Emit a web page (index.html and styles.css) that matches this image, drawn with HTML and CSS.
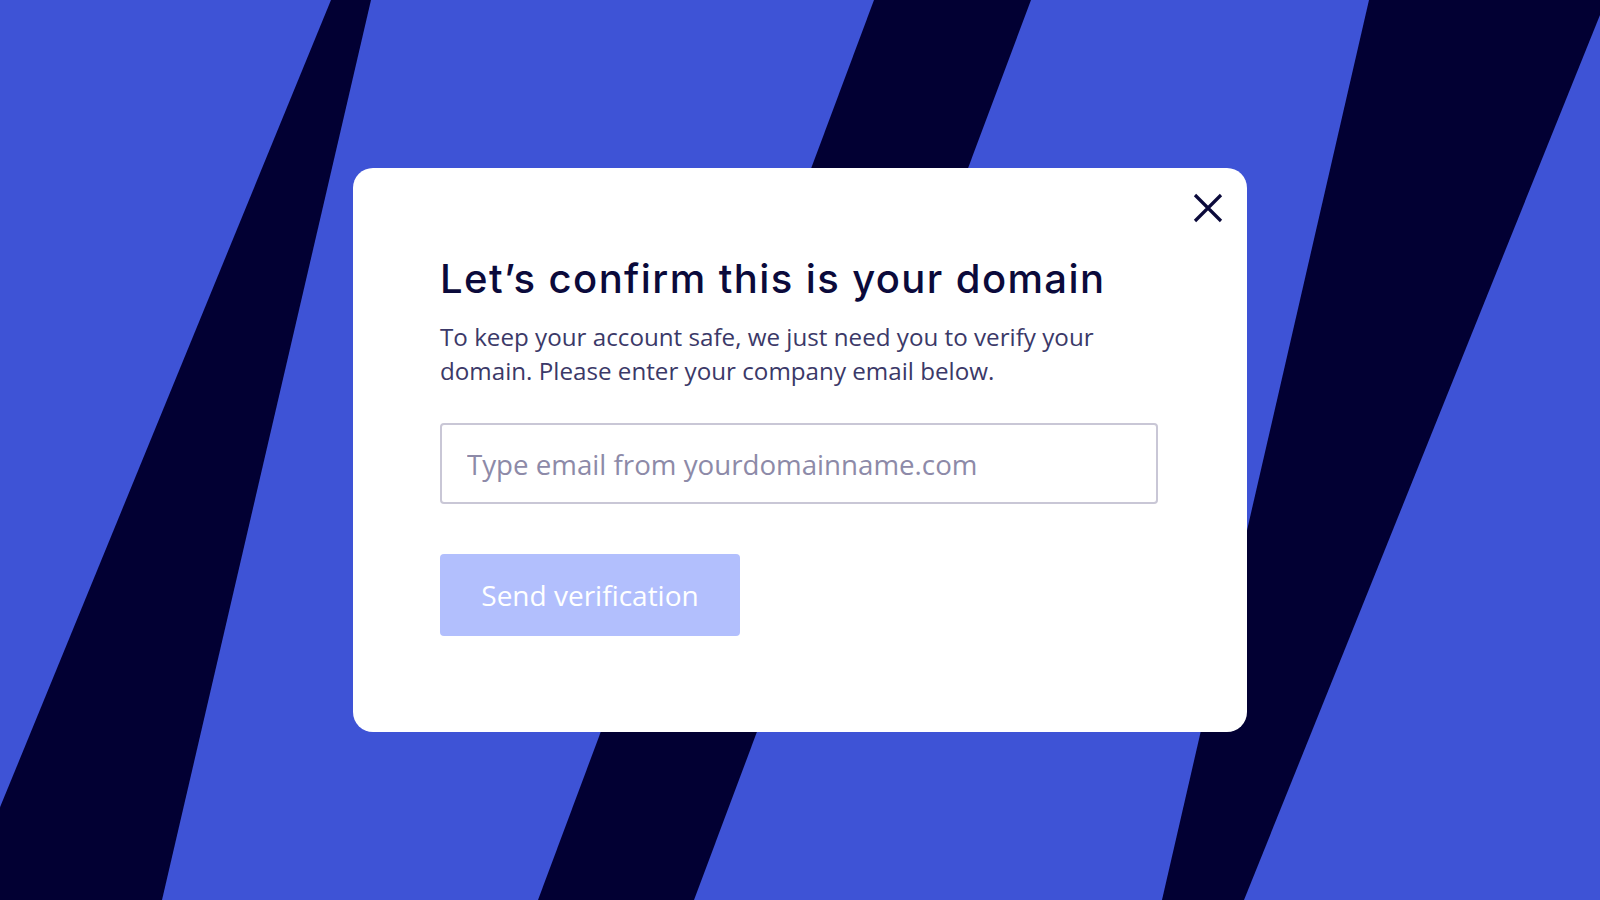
FILE: index.html
```html
<!DOCTYPE html>
<html lang="en">
<head>
  <meta charset="UTF-8" />
  <meta name="viewport" content="width=device-width, initial-scale=1.0"/>
  <title>Verify your domain</title>
  <link rel="stylesheet" href="styles.css">
</head>
<body>

  <div class="backdrop">
    <!-- brand stripes behind the dialog -->
    <svg class="stripes" viewBox="0 0 1600 900" preserveAspectRatio="none" aria-hidden="true">
      <polygon points="331,0 371,0 162,900 -38,900" />
      <polygon points="874,0 1031,0 694,900 538,900" />
      <polygon points="1369,0 1606,0 1244,900 1162,900" />
    </svg>

    <div class="modal" role="dialog" aria-labelledby="modalTitle">
      <button class="close" type="button" aria-label="Close">
        <svg viewBox="0 0 30 30" width="30" height="30">
          <path d="M2 2 L28 28 M28 2 L2 28" />
        </svg>
      </button>

      <h1 id="modalTitle" class="title">Let’s confirm this is your domain</h1>
      <p class="lead">To keep your account safe, we just need you to verify your domain. Please enter your company email below.</p>

      <form class="verify-form" onsubmit="return false;">
        <input type="email" class="email-input" name="email" placeholder="Type email from yourdomainname.com">
        <button type="submit" class="send-btn">Send verification</button>
      </form>
    </div>
  </div>

</body>
</html>
```

FILE: styles.css
```css
body {
  margin: 0;
  font-family: "Open Sans", Arial, sans-serif;
}

.backdrop {
  position: relative;
  width: 100%;
  height: 900px;
  overflow: hidden;
  background-color: #3e53d6;
  display: flex;
  align-items: center;
  justify-content: center;
}

.stripes {
  position: absolute;
  top: 0;
  left: 0;
  width: 100%;
  height: 100%;
}

.stripes polygon {
  fill: #020033;
}

.modal {
  position: relative;
  box-sizing: border-box;
  width: 894px;
  height: 564px;
  padding: 86px 87px 0;
  background: white;
  border-radius: 20px;
}

.close {
  position: absolute;
  top: 25px;
  right: 24px;
  padding: 0;
  border: none;
  background: none;
  cursor: pointer;
}

.close svg {
  display: block;
}

.close path {
  stroke: #0b0a3b;
  stroke-width: 3.2;
  fill: none;
}

.title {
  margin: 0;
  font-family: Inter, Lato, sans-serif;
  font-weight: 500;
  font-size: 40px;
  line-height: 50px;
  letter-spacing: 1.4px;
  color: #0b0a3b;
}

.lead {
  margin: 16px 0 0;
  font-size: 24.2px;
  line-height: 34px;
  color: #3b3968;
}

.verify-form {
  display: flex;
  flex-direction: column;
  align-items: flex-start;
}

.email-input {
  box-sizing: border-box;
  width: 718px;
  height: 81px;
  margin-top: 35px;
  padding: 0 25px;
  border: 2px solid #c9c7d6;
  border-radius: 4px;
  font-family: "Open Sans", Arial, sans-serif;
  font-size: 27.7px;
  color: #2b2950;
  outline: none;
}

.email-input::placeholder {
  color: #8d8aa8;
}

.send-btn {
  width: 300px;
  height: 82px;
  margin-top: 50px;
  border: none;
  border-radius: 4px;
  background-color: #b2bffd;
  color: white;
  font-family: "Open Sans", Arial, sans-serif;
  font-size: 28px;
  cursor: pointer;
}
```
